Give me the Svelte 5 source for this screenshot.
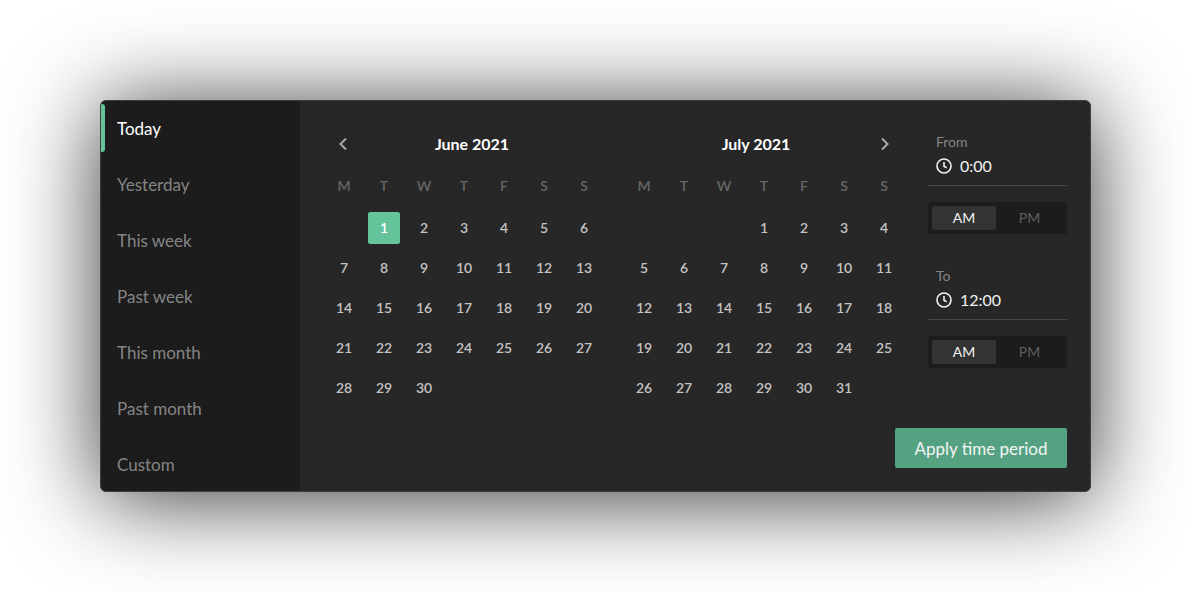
<script lang="ts">
  const presets = ['Today', 'Yesterday', 'This week', 'Past week', 'This month', 'Past month', 'Custom'];
  const weekdays = ['M', 'T', 'W', 'T', 'F', 'S', 'S'];

  // leading = empty cells before the 1st
  const months = [
    { title: 'June 2021', leading: 1, days: 30, prev: true },
    { title: 'July 2021', leading: 3, days: 31, prev: false },
  ];

  const cells = (leading: number, days: number) => [
    ...Array(leading).fill(null),
    ...Array.from({ length: days }, (_, i) => i + 1),
  ];

  const times = [
    { label: 'From', value: '0:00' },
    { label: 'To', value: '12:00' },
  ];

  let active = $state('Today');
</script>

<div class="page">
  <div class="card">
    <nav class="presets">
      {#each presets as p}
        <button class="preset" class:active={active === p} onclick={() => (active = p)}>{p}</button>
      {/each}
    </nav>

    <div class="main">
      <div class="top">
        {#each months as m}
          <section class="month" class:first={m.prev}>
            <header>
              {#if m.prev}
                <svg class="chev" width="10" height="14" viewBox="0 0 10 14"><path d="M8 1.5 2.5 7 8 12.5" /></svg>
              {/if}
              <h3>{m.title}</h3>
              {#if !m.prev}
                <svg class="chev next" width="10" height="14" viewBox="0 0 10 14"><path d="M2 1.5 7.5 7 2 12.5" /></svg>
              {/if}
            </header>
            <div class="weekdays">
              {#each weekdays as w}<span>{w}</span>{/each}
            </div>
            <div class="days">
              {#each cells(m.leading, m.days) as d}
                <span class="day">
                  {#if d}<span class="num" class:selected={m.prev && d === 1}>{d}</span>{/if}
                </span>
              {/each}
            </div>
          </section>
        {/each}

        <aside class="times">
          {#each times as t}
            <div class="time-block">
              <div class="label">{t.label}</div>
              <div class="value">
                <svg width="16" height="16" viewBox="0 0 16 16">
                  <circle cx="8" cy="8" r="7" />
                  <path d="M8 4v4.2l2.6 1.5" />
                </svg>
                {t.value}
              </div>
              <div class="ampm">
                <span class="on">AM</span>
                <span>PM</span>
              </div>
            </div>
          {/each}
        </aside>
      </div>

      <div class="actions">
        <button class="apply">Apply time period</button>
      </div>
    </div>
  </div>
</div>

<style>
  :global(body) {
    margin: 0;
    background: #fff;
    overflow: hidden;
  }
  .page {
    height: 592px;
    box-sizing: border-box;
    padding: 100px 100px 0;
    font-family: Lato, 'Open Sans', sans-serif;
  }
  .card {
    width: 991px;
    height: 392px;
    box-sizing: border-box;
    display: flex;
    overflow: hidden;
    border: 1px solid #3e3e3e;
    border-radius: 6px;
    background: #272727;
    box-shadow: 0 6px 90px rgba(0, 0, 0, 0.8);
  }
  .presets {
    flex: 0 0 199px;
    display: flex;
    flex-direction: column;
    margin-top: -1px;
    background: #1c1c1c;
  }
  .preset {
    position: relative;
    flex: 0 0 56px;
    padding: 0 0 0 16px;
    border: none;
    background: none;
    text-align: left;
    font: inherit;
    font-size: 17px;
    color: #858585;
    cursor: pointer;
  }
  .preset.active {
    color: #fff;
  }
  .preset.active::before {
    content: '';
    position: absolute;
    left: 0;
    top: 4px;
    bottom: 4px;
    width: 4px;
    border-radius: 0 3px 3px 0;
    background: #65c39c;
  }
  .main {
    flex: 1;
    display: flex;
    flex-direction: column;
    padding: 27px 23px 23px 24px;
  }
  .top {
    display: flex;
    flex: 1;
  }
  .month {
    width: 280px;
  }
  .month + .month {
    margin-left: 20px;
  }
  .month header {
    height: 32px;
    display: flex;
    align-items: center;
  }
  h3 {
    flex: 1;
    margin: -2px 0 0;
    text-align: center;
    font-size: 16px;
    font-weight: 700;
    color: #fff;
  }
  .chev {
    flex: none;
    margin: 0 -8px 0 14px;
    fill: none;
    stroke: #a8a8a8;
    stroke-width: 2;
  }
  .chev.next {
    margin: 0 14px 0 -8px;
  }
  .weekdays {
    display: grid;
    grid-template-columns: repeat(7, 40px);
    height: 48px;
    box-sizing: border-box;
    padding-top: 3px;
    align-items: center;
    font-size: 14px;
    font-weight: 600;
    color: #666;
    text-align: center;
  }
  .days {
    display: grid;
    grid-template-columns: repeat(7, 40px);
    grid-auto-rows: 40px;
  }
  .day {
    display: flex;
    align-items: center;
    justify-content: center;
  }
  .num {
    width: 32px;
    height: 32px;
    box-sizing: border-box;
    padding-bottom: 2px;
    display: flex;
    align-items: center;
    justify-content: center;
    border-radius: 2px;
    font-size: 14px;
    font-weight: 600;
    color: #c4c4c4;
  }
  .num.selected {
    background: #65c39c;
    color: #fff;
  }
  .times {
    width: 139px;
    margin-left: 24px;
    display: flex;
    flex-direction: column;
    gap: 28px;
  }
  .time-block {
    display: flex;
    flex-direction: column;
  }
  .label {
    padding-left: 8px;
    font-size: 14px;
    line-height: 28px;
    color: #858585;
  }
  .value {
    height: 29px;
    display: flex;
    align-items: flex-start;
    gap: 8px;
    padding-left: 8px;
    border-bottom: 1px solid #464646;
    font-size: 16px;
    line-height: 20px;
    color: #f2f2f2;
  }
  .value svg {
    margin-top: 2px;
    fill: none;
    stroke: #f2f2f2;
    stroke-width: 1.6;
  }
  .ampm {
    margin-top: 16px;
    height: 32px;
    box-sizing: border-box;
    padding: 4px;
    display: flex;
    border-radius: 3px;
    background: #1c1c1c;
    font-size: 14px;
    color: #5f5f5f;
  }
  .ampm span {
    flex: 0 0 64px;
    padding-bottom: 1px;
    display: flex;
    align-items: center;
    justify-content: center;
    border-radius: 2px;
  }
  .ampm span + span {
    flex: 1;
  }
  .ampm .on {
    box-sizing: border-box;
    background: #333;
    color: #f2f2f2;
  }
  .actions {
    display: flex;
    justify-content: flex-end;
  }
  .apply {
    width: 172px;
    height: 40px;
    border: none;
    border-radius: 2px;
    background: #55a283;
    color: #f4f4f4;
    font: inherit;
    font-size: 17px;
    cursor: pointer;
  }
</style>
